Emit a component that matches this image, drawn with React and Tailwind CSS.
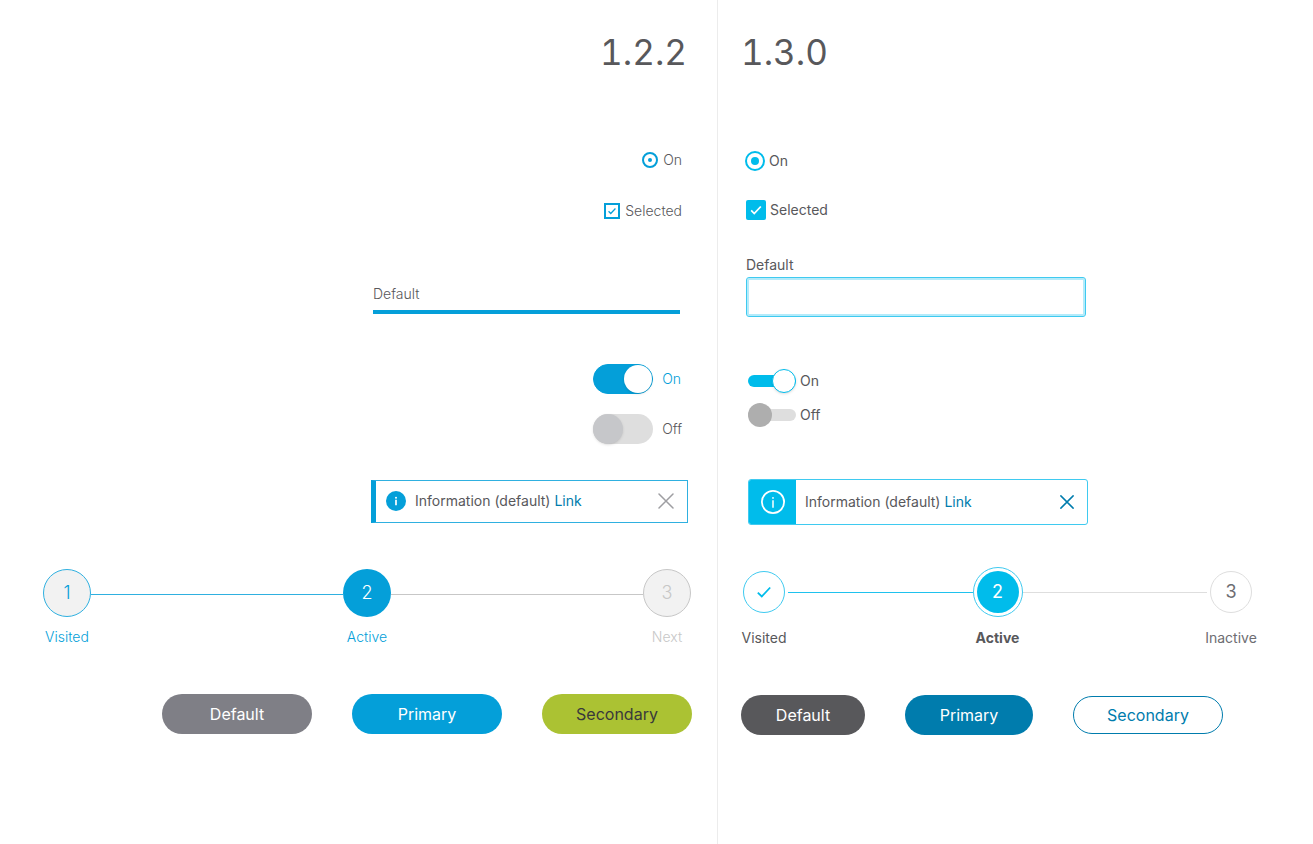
import React from "react";

function Check({ className, width }) {
  return (
    <svg viewBox="0 0 16 16" fill="none" stroke="currentColor" strokeWidth={width} className={className} aria-hidden="true">
      <path d="M2.5 8.5 6 12l7.5-8" />
    </svg>
  );
}

function Cross({ className, width }) {
  return (
    <svg viewBox="0 0 16 16" fill="none" stroke="currentColor" strokeWidth={width} strokeLinecap="round" className={className} aria-hidden="true">
      <path d="M1 1 15 15M15 1 1 15" />
    </svg>
  );
}

function OldPanel() {
  return (
    <section className="flex flex-col items-end border-r border-[#ececec] font-light text-[#58585b]">
      <h1 className="mt-8 pr-[30px] text-[35px] leading-[40px] font-normal tabular-nums">1.2.2</h1>

      <label className="mt-[78px] flex h-5 items-center gap-[5px] pr-[35px]">
        <input
          type="radio"
          name="old-radio"
          defaultChecked
          className="grid size-4 appearance-none place-items-center rounded-full border-2 border-[#049fd9] after:size-1 after:rounded-full after:bg-[#049fd9]"
        />
        On
      </label>

      <label className="mt-[31px] flex h-5 items-center gap-[5px] pr-[35px]">
        <span className="grid place-items-center text-[#049fd9]">
          <input type="checkbox" defaultChecked className="col-start-1 row-start-1 size-4 appearance-none border-2 border-[#049fd9]" />
          <Check className="pointer-events-none col-start-1 row-start-1 size-[10px]" width="2" />
        </span>
        Selected
      </label>

      <div className="mt-[63px] pr-[37px]">
        <input
          type="text"
          aria-label="Default"
          placeholder="Default"
          className="block h-[30px] w-[307px] border-b-4 border-[#049fd9] pb-2 outline-none placeholder:text-[#58585b]"
        />
      </div>

      <div className="mt-[50px] flex flex-col gap-5 pr-[35px]">
        <label className="flex items-center gap-[9px] text-[#049fd9]">
          <input
            type="checkbox"
            role="switch"
            defaultChecked
            className="flex h-[30px] w-[60px] appearance-none justify-end rounded-full border border-[#049fd9] bg-[#049fd9] after:size-7 after:rounded-full after:bg-white after:shadow-sm"
          />
          On
        </label>
        <label className="flex items-center gap-[9px]">
          <input
            type="checkbox"
            role="switch"
            className="flex h-[30px] w-[60px] appearance-none rounded-full bg-[#dedede] after:size-[30px] after:rounded-full after:bg-[#c6c7ca] after:shadow-sm"
          />
          Off
        </label>
      </div>

      <div className="mt-9 mr-[29px] flex h-[43px] w-[317px] items-center border border-l-[5px] border-[#2fb0e0] border-l-[#049fd9] pr-[13px] pb-[2px] pl-[10px] font-normal">
        <svg viewBox="0 0 20 20" className="size-5" aria-hidden="true">
          <circle cx="10" cy="10" r="10" fill="#049fd9" />
          <circle cx="10" cy="6.8" r="1" fill="#fff" />
          <path d="M10 8.8v5.4" stroke="#fff" strokeWidth="1.7" />
        </svg>
        <p className="ml-[9px] flex-1">
          Information (default) <a href="#old" className="text-[#007cad]">Link</a>
        </p>
        <button type="button" aria-label="Dismiss" className="text-[#9e9ea2]">
          <Cross className="size-4" width="1.5" />
        </button>
      </div>

      <ol className="mt-[46px] flex w-full pr-[26px] pl-[43px] text-[#049fd9]">
        <li className="flex w-12 flex-col items-center">
          <span className="grid size-12 place-items-center rounded-full border border-[#2fb0e0] bg-[#f2f2f2] text-[18px]">1</span>
          <span className="mt-[10px]">Visited</span>
        </li>
        <li aria-hidden="true" className="mt-[25px] h-px flex-1 bg-[#2fb0e0]" />
        <li className="flex w-12 flex-col items-center">
          <span className="grid size-12 place-items-center rounded-full bg-[#049fd9] text-[18px] text-white">2</span>
          <span className="mt-[10px]">Active</span>
        </li>
        <li aria-hidden="true" className="mt-[25px] h-px flex-1 bg-[#c7c7c7]" />
        <li className="flex w-12 flex-col items-center text-[#c7c7c7]">
          <span className="grid size-12 place-items-center rounded-full border border-[#c7c7c7] bg-[#f2f2f2] text-[18px]">3</span>
          <span className="mt-[10px]">Next</span>
        </li>
      </ol>

      <div className="mt-[47px] flex gap-10 pr-[25px] text-[16px] font-normal">
        <button type="button" className="h-10 w-[150px] rounded-full bg-[#7f7f86] text-white">Default</button>
        <button type="button" className="h-10 w-[150px] rounded-full bg-[#049fd9] text-white">Primary</button>
        <button type="button" className="h-10 w-[150px] rounded-full bg-[#abc233] text-[#39393b]">Secondary</button>
      </div>
    </section>
  );
}

function NewPanel() {
  return (
    <section className="flex flex-col items-start font-normal text-[#58585b]">
      <h1 className="mt-8 pl-[23px] text-[35px] leading-[40px] tabular-nums">1.3.0</h1>

      <label className="mt-[79px] flex h-5 items-center gap-1 pl-[27px]">
        <input
          type="radio"
          name="new-radio"
          defaultChecked
          className="grid size-5 appearance-none place-items-center rounded-full border-2 border-[#00bceb] after:size-2 after:rounded-full after:bg-[#00bceb]"
        />
        On
      </label>

      <label className="mt-[29px] flex h-5 items-center gap-1 pl-7">
        <span className="grid place-items-center text-white">
          <input type="checkbox" defaultChecked className="col-start-1 row-start-1 size-5 appearance-none rounded-[2px] bg-[#00bceb]" />
          <Check className="pointer-events-none col-start-1 row-start-1 size-[14px]" width="2" />
        </span>
        Selected
      </label>

      <label className="mt-[35px] flex flex-col gap-[2px] pl-7">
        Default
        <input
          type="text"
          className="block h-10 w-[340px] rounded-[3px] border border-[#3fcaf0] px-3 inset-ring-2 inset-ring-[#b4ebfa] outline-none"
        />
      </label>

      <div className="mt-[52px] flex flex-col gap-[10px] pl-[30px]">
        <label className="flex items-center gap-1">
          <span className="grid items-center">
            <span className="col-start-1 row-start-1 h-3 w-12 rounded-full bg-[#00bceb]" />
            <input
              type="checkbox"
              role="switch"
              defaultChecked
              className="col-start-1 row-start-1 flex h-6 w-12 appearance-none justify-end after:size-6 after:rounded-full after:border after:border-[#00bceb] after:bg-white after:shadow-sm"
            />
          </span>
          On
        </label>
        <label className="flex items-center gap-1">
          <span className="grid items-center">
            <span className="col-start-1 row-start-1 h-3 w-12 rounded-full bg-[#dedede]" />
            <input
              type="checkbox"
              role="switch"
              className="col-start-1 row-start-1 flex h-6 w-12 appearance-none after:size-6 after:rounded-full after:bg-[#aeaeae]"
            />
          </span>
          Off
        </label>
      </div>

      <div className="mt-[52px] ml-[30px] flex h-[46px] w-[340px] items-center overflow-hidden rounded-[3px] border border-[#3fcaf0] pr-[13px]">
        <div className="grid w-[47px] place-items-center self-stretch bg-[#00bceb]">
          <svg viewBox="0 0 24 24" fill="none" className="size-6" aria-hidden="true">
            <circle cx="12" cy="12" r="11.1" stroke="#fff" strokeWidth="1.8" />
            <circle cx="12" cy="7.9" r="0.9" fill="#fff" />
            <path d="M12 10.2v7.6" stroke="#fff" strokeWidth="1.5" />
          </svg>
        </div>
        <p className="ml-[9px] flex-1">
          Information (default) <a href="#new" className="text-[#007cad]">Link</a>
        </p>
        <button type="button" aria-label="Dismiss" className="text-[#007cad]">
          <Cross className="size-[14px]" width="1.7" />
        </button>
      </div>

      <ol className="mt-[42px] flex w-full pr-[61px] pl-[25px]">
        <li className="mt-1 flex w-[42px] flex-col items-center">
          <span className="grid size-[42px] place-items-center rounded-full border border-[#3fcaf0] text-[#00bceb]">
            <Check className="size-[18px]" width="1.6" />
          </span>
          <span className="mt-[15px]">Visited</span>
        </li>
        <li aria-hidden="true" className="mt-[25px] ml-[3px] h-px flex-1 bg-[#1fc2ee]" />
        <li className="flex w-[50px] flex-col items-center">
          <span className="grid size-[50px] place-items-center rounded-full border border-[#3fcaf0]">
            <span className="grid size-[42px] place-items-center rounded-full bg-[#00bceb] text-[18px] text-white">2</span>
          </span>
          <span className="mt-[11px] font-bold">Active</span>
        </li>
        <li aria-hidden="true" className="mt-[25px] mr-[3px] h-px flex-1 bg-[#dedede]" />
        <li className="mt-1 flex w-[42px] flex-col items-center text-[#6d6d72]">
          <span className="grid size-[42px] place-items-center rounded-full border border-[#dedede] text-[18px]">3</span>
          <span className="mt-[15px]">Inactive</span>
        </li>
      </ol>

      <div className="mt-[47px] flex items-center gap-10 pl-[23px] text-[16px]">
        <button type="button" className="h-10 w-[124px] rounded-full bg-[#58585b] text-white">Default</button>
        <button type="button" className="h-10 w-[128px] rounded-full bg-[#007cad] text-white">Primary</button>
        <button type="button" className="h-[38px] w-[150px] rounded-full border border-[#007cad] text-[#007cad]">Secondary</button>
      </div>
    </section>
  );
}

export default function App() {
  return (
    <main className="grid min-h-screen grid-cols-[718fr_595fr] bg-white font-['Inter',sans-serif] text-[14px] leading-[20px]">
      <OldPanel />
      <NewPanel />
    </main>
  );
}
